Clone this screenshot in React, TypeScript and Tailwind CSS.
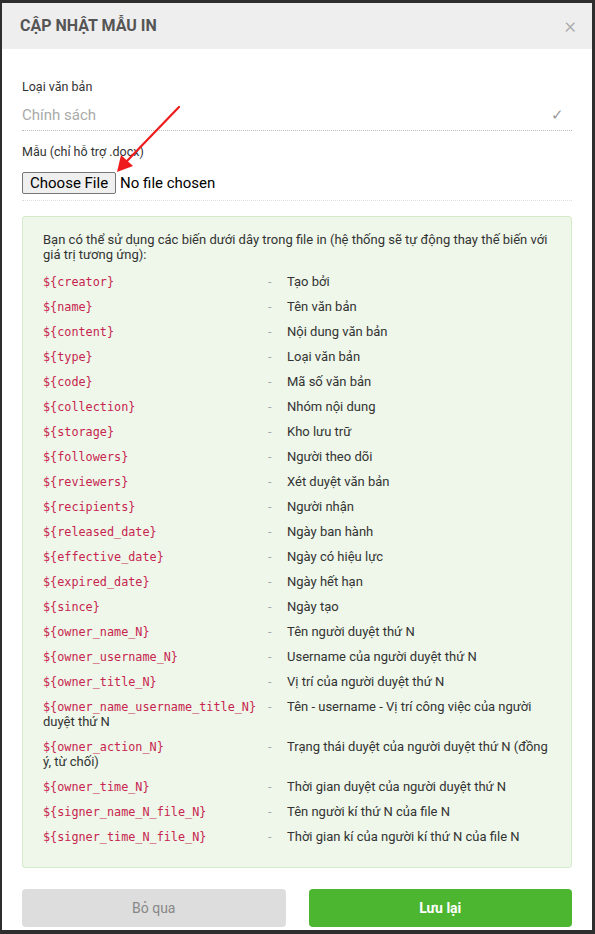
import React from "react";

// ─── Data ─────────────────────────────────────────────────────────────────────

const variables: [string, string][] = [
  ["${creator}", "Tạo bởi"],
  ["${name}", "Tên văn bản"],
  ["${content}", "Nội dung văn bản"],
  ["${type}", "Loại văn bản"],
  ["${code}", "Mã số văn bản"],
  ["${collection}", "Nhóm nội dung"],
  ["${storage}", "Kho lưu trữ"],
  ["${followers}", "Người theo dõi"],
  ["${reviewers}", "Xét duyệt văn bản"],
  ["${recipients}", "Người nhận"],
  ["${released_date}", "Ngày ban hành"],
  ["${effective_date}", "Ngày có hiệu lực"],
  ["${expired_date}", "Ngày hết hạn"],
  ["${since}", "Ngày tạo"],
  ["${owner_name_N}", "Tên người duyệt thứ N"],
  ["${owner_username_N}", "Username của người duyệt thứ N"],
  ["${owner_title_N}", "Vị trí của người duyệt thứ N"],
  ["${owner_name_username_title_N}", "Tên - username - Vị trí công việc của người duyệt thứ N"],
  ["${owner_action_N}", "Trạng thái duyệt của người duyệt thứ N (đồng ý, từ chối)"],
  ["${owner_time_N}", "Thời gian duyệt của người duyệt thứ N"],
  ["${signer_name_N_file_N}", "Tên người kí thứ N của file N"],
  ["${signer_time_N_file_N}", "Thời gian kí của người kí thứ N của file N"],
];

// ─── Page ─────────────────────────────────────────────────────────────────────

export default function App() {
  return (
    <div
      className="relative h-[934px] w-[595px] overflow-hidden bg-[#2e2e2e] pt-[3px] pl-[2px]"
      style={{ fontFamily: "Roboto, 'Noto Sans', sans-serif" }}
    >
      <div className="w-[590px] bg-white">
        {/* header */}
        <div className="flex h-[46px] items-center justify-between bg-[#eeeeee] pl-[18px] pr-[16px]">
          <h2 className="text-[16px] font-bold uppercase text-[#555]">Cập nhật mẫu in</h2>
          <span className="text-[22px] font-light leading-none text-[#aaa]">×</span>
        </div>

        {/* body */}
        <div className="px-[20px] pt-[30px]">
          <label className="block text-[12.5px] leading-[16px] text-[#333]">Loại văn bản</label>
          <div className="mt-[7px] flex h-[29px] items-center justify-between border-b border-dotted border-[#bbb] pb-[1px]">
            <span className="text-[15px] text-[#aaa]">Chính sách</span>
            <span className="mr-[8px] text-[15px] text-[#999]">✓</span>
          </div>

          <label className="mt-[13px] block text-[12.5px] leading-[16px] text-[#333]">
            Mẫu (chỉ hỗ trợ .docx)
          </label>
          <div className="mt-[12px] flex h-[29px] items-start border-b border-dotted border-[#ddd]">
            <span className="flex h-[22px] items-center rounded-[2px] border border-[#767676] bg-[#efefef] px-[7px] text-[15px] text-black">
              Choose File
            </span>
            <span className="ml-[4px] text-[15px] leading-[22px] text-black">No file chosen</span>
          </div>

          {/* variables */}
          <div className="mt-[15px] rounded-[3px] border border-[#d3ebc9] bg-[#eef7ea] px-[20px] pt-[15px] pb-[13px] text-[13px] leading-[15px] text-[#333]">
            <p className="mb-[12px]">
              Bạn có thể sử dụng các biến dưới dây trong file in (hệ thống sẽ tự động thay thế biến với giá trị tương ứng):
            </p>
            {variables.map(([code, text]) => (
              <div key={code} className="mb-[10px] leading-[15px]">
                <code
                  className="inline-block w-[225px] text-[11.8px] leading-[12px] text-[#c7254e]"
                  style={{ fontFamily: "'DejaVu Sans Mono', monospace" }}
                >
                  {code}
                </code>
                <span className="inline-block w-[19px] text-[#aaa]">-</span>
                {text}
              </div>
            ))}
          </div>

          {/* footer */}
          <div className="mt-[21px] grid grid-cols-2 gap-[23px] pb-[3px]">
            <button className="h-[38px] rounded-[4px] bg-[#dddddd] text-[14px] text-[#888]">Bỏ qua</button>
            <button className="h-[38px] rounded-[4px] bg-[#4db630] text-[14px] font-bold text-white">Lưu lại</button>
          </div>
        </div>
      </div>

      {/* annotation arrow */}
      <svg className="absolute left-0 top-0" width="595" height="934" viewBox="0 0 595 934">
        <line x1="179" y1="107" x2="126" y2="162" stroke="#ee1c1c" strokeWidth="2.2" strokeLinecap="round" />
        <polygon points="117,172 121,155 133,166" fill="#ee1c1c" />
      </svg>
    </div>
  );
}
